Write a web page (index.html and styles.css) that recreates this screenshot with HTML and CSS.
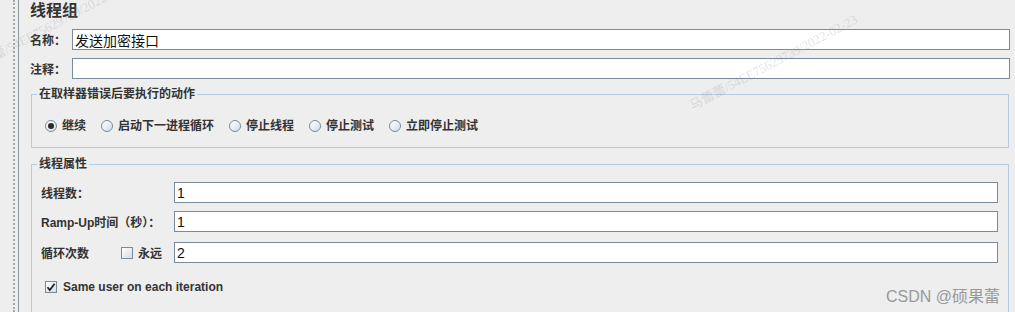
FILE: index.html
```html
<!DOCTYPE html>
<html lang="zh-CN">
<head>
  <meta charset="UTF-8" />
  <title>线程组</title>
  <link rel="stylesheet" href="styles.css">
</head>
<body>
  <div class="window">
    <div class="splitter"></div>

    <div class="panel">
      <h1 class="panel-title">线程组</h1>

      <div class="field-row">
        <label class="field-label">名称：</label>
        <input type="text" class="text-input name-input" value="发送加密接口">
      </div>

      <div class="field-row">
        <label class="field-label">注释：</label>
        <input type="text" class="text-input" value="">
      </div>

      <fieldset class="group on-error">
        <legend>在取样器错误后要执行的动作</legend>
        <div class="radio-group">
          <span class="radio-item"><span class="radio checked"></span>继续</span>
          <span class="radio-item"><span class="radio"></span>启动下一进程循环</span>
          <span class="radio-item"><span class="radio"></span>停止线程</span>
          <span class="radio-item"><span class="radio"></span>停止测试</span>
          <span class="radio-item"><span class="radio"></span>立即停止测试</span>
        </div>
      </fieldset>

      <fieldset class="group thread-props">
        <legend>线程属性</legend>

        <div class="prop-row">
          <label class="prop-label">线程数：</label>
          <input type="text" class="text-input" value="1">
        </div>

        <div class="prop-row ramp-row">
          <label class="prop-label">Ramp-Up时间（秒）：</label>
          <input type="text" class="text-input" value="1">
        </div>

        <div class="prop-row">
          <div class="prop-label loop-label">
            <span>循环次数</span>
            <span class="check-item"><span class="checkbox"></span>永远</span>
          </div>
          <input type="text" class="text-input" value="2">
        </div>

        <div class="check-row">
          <span class="checkbox checked">
            <svg width="10" height="10" viewBox="0 0 10 10"><path d="M1.5 5.2 L3.8 8 L8.6 1.8" fill="none" stroke="#222" stroke-width="1.8"/></svg>
          </span>
          Same user on each iteration
        </div>
      </fieldset>
    </div>
  </div>

  <!-- watermarks over the screenshot -->
  <span class="mark mark-top">马蕾蕾/54EE75629739/2022-02-23</span>
  <span class="mark mark-left">马蕾蕾/54EE75629739/2022-02-23</span>
  <span class="mark mark-bottom">马蕾蕾/54EE75629739/2022-02-23</span>
  <span class="csdn-mark">CSDN @硕果蕾</span>
</body>
</html>
```

FILE: styles.css
```css
* {
  box-sizing: border-box;
  margin: 0;
  padding: 0;
}

body {
  width: 1015px;
  height: 312px;
  overflow: hidden;
  position: relative;
  background: #eeeeee;
  color: #333;
  font-family: "Liberation Sans", "Noto Sans CJK SC", sans-serif;
  font-size: 12px;
}

.window {
  display: flex;
  height: 312px;
}

.splitter {
  margin-left: 13px;
  width: 6px;
  border-left: 2px dotted #a8a8a8;
  border-right: 1px solid #8c96a0;
}

.panel {
  flex: 1;
  padding: 0 5px 0 11px;
}

.panel-title {
  font-size: 16px;
  font-weight: bold;
  line-height: 22px;
  color: #333;
}

.field-row {
  display: flex;
  align-items: center;
  margin-top: 7px;
}

.field-row + .field-row {
  margin-top: 8px;
}

.field-label {
  width: 42px;
  font-weight: bold;
}

.text-input {
  flex: 1;
  height: 21px;
  border: 1px solid #7a8a99;
  background: #fff;
  padding: 0 2px;
  font-family: "Liberation Sans", "Noto Sans CJK SC", sans-serif;
  font-size: 14px;
  color: #111;
  outline: none;
}

.group {
  border: 1px solid #b3cbe3;
  margin: 7px 1px 0 1px;
  padding: 0 10px 0 9px;
}

.group legend {
  font-weight: bold;
  line-height: 16px;
  padding: 0 2px;
  margin-left: -4px;
}

.on-error {
  padding-top: 14px;
  padding-bottom: 11px;
}

.radio-group {
  display: flex;
  gap: 15px;
  padding-left: 4px;
  line-height: 20px;
  font-weight: bold;
}

.radio-item {
  display: flex;
  align-items: center;
  gap: 5px;
}

.radio {
  width: 12px;
  height: 12px;
  border-radius: 50%;
  border: 1px solid #7a8a99;
  background: linear-gradient(135deg, #ffffff, #d3dce6);
  display: flex;
  align-items: center;
  justify-content: center;
}

.radio.checked::after {
  content: "";
  width: 6px;
  height: 6px;
  border-radius: 50%;
  background: #2a2a2a;
}

/* runs on below the visible area, so no bottom edge */
.thread-props {
  margin-top: 8px;
  height: 156px;
  border-bottom: none;
  padding-top: 10px;
}

.prop-row {
  display: flex;
  align-items: center;
  margin-bottom: 8px;
}

.ramp-row {
  margin-bottom: 10px;
}

.prop-label {
  width: 133px;
  font-weight: bold;
}

.loop-label {
  display: flex;
  align-items: center;
  gap: 32px;
}

.check-item {
  display: flex;
  align-items: center;
  gap: 5px;
}

.checkbox {
  width: 12px;
  height: 12px;
  border: 1px solid #7a8a99;
  background: linear-gradient(135deg, #ffffff, #d3dce6);
  display: flex;
  align-items: center;
  justify-content: center;
}

.check-row {
  display: flex;
  align-items: center;
  gap: 6px;
  margin-top: 15px;
  padding-left: 4px;
  line-height: 18px;
  font-weight: bold;
}

.mark {
  position: absolute;
  font-family: "Liberation Serif", "Noto Sans CJK SC", serif;
  font-size: 13px;
  color: rgba(150, 150, 150, 0.28);
  white-space: nowrap;
  transform: rotate(-28deg);
  transform-origin: 0 50%;
  pointer-events: none;
}

.mark-top {
  left: 690px;
  top: 96px;
}

.mark-left {
  left: -30px;
  top: 58px;
}

.mark-bottom {
  left: 168px;
  top: 396px;
}

.csdn-mark {
  position: absolute;
  right: 15px;
  top: 283px;
  font-family: "Liberation Sans", "Noto Sans CJK SC", sans-serif;
  font-size: 16px;
  color: #999;
  pointer-events: none;
}
```
